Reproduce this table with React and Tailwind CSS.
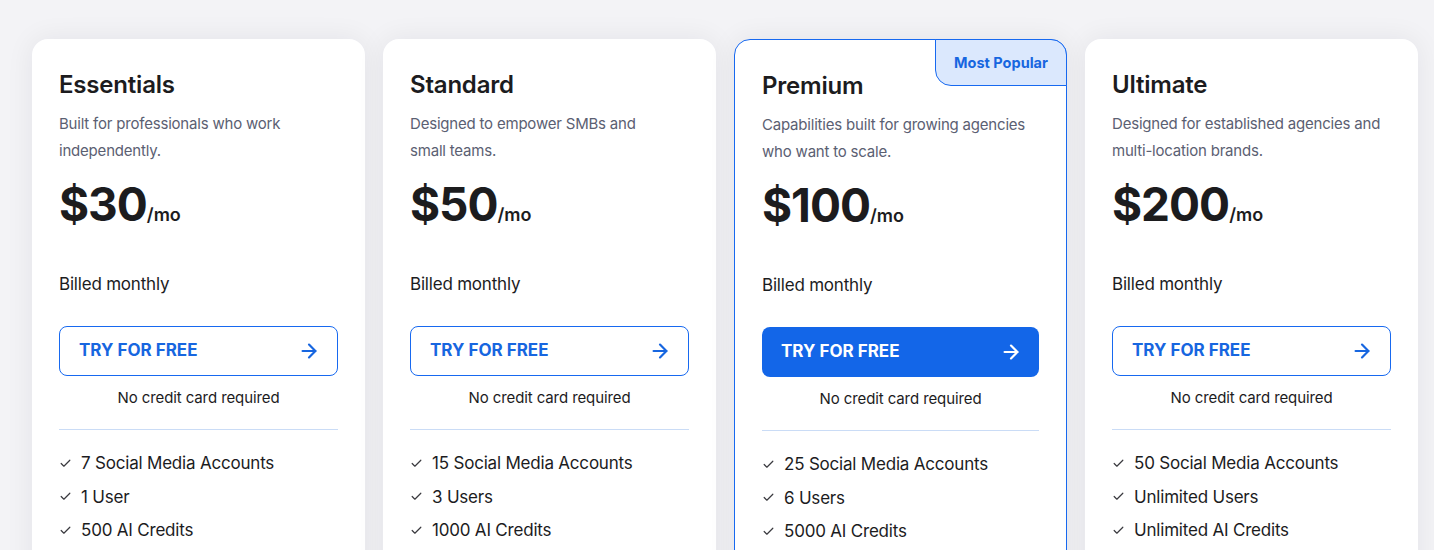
import { ArrowRight, Check } from "lucide-react";

const plans = [
  {
    name: "Essentials",
    desc: ["Built for professionals who work", "independently."],
    price: "$30",
    features: ["7 Social Media Accounts", "1 User", "500 AI Credits"],
  },
  {
    name: "Standard",
    desc: ["Designed to empower SMBs and", "small teams."],
    price: "$50",
    features: ["15 Social Media Accounts", "3 Users", "1000 AI Credits"],
  },
  {
    name: "Premium",
    desc: ["Capabilities built for growing agencies", "who want to scale."],
    price: "$100",
    features: ["25 Social Media Accounts", "6 Users", "5000 AI Credits"],
    popular: true,
  },
  {
    name: "Ultimate",
    desc: ["Designed for established agencies and", "multi-location brands."],
    price: "$200",
    features: ["50 Social Media Accounts", "Unlimited Users", "Unlimited AI Credits"],
  },
];

function PlanCard({ plan }) {
  return (
    <div
      className={`relative bg-white rounded-2xl shadow-[0_0_28px_rgba(20,20,40,0.07)] px-[27px] pt-[30px] pb-10 ${
        plan.popular ? "border border-[#1769f0]" : ""
      }`}
    >
      {plan.popular && (
        <div className="absolute -top-px -right-px h-[47px] w-[132px] flex items-center justify-center bg-[#dbe8fd] border border-[#1769f0] rounded-tr-2xl rounded-bl-2xl text-[14.5px] font-bold text-[#1766e0]">
          Most Popular
        </div>
      )}
      <h3 className="text-[24px] leading-8 font-semibold text-[#1c1c1e] tracking-[-0.2px]">{plan.name}</h3>
      <p className="mt-[9px] text-[15px] leading-[27px] text-[#5b6072] tracking-[-0.2px] whitespace-nowrap">
        {plan.desc[0]}
        <br />
        {plan.desc[1]}
      </p>
      <div className="mt-[16px] flex items-baseline text-[#1c1c1e]">
        <span className="text-[46px] leading-[48px] font-bold tracking-[-1px]">{plan.price}</span>
        <span className="text-[18px] font-semibold">/mo</span>
      </div>
      <p className="mt-[44px] text-[17px] leading-6 text-[#1c1c1e] tracking-[-0.2px]">Billed monthly</p>
      <button
        className={`mt-[30px] w-full h-[50px] rounded-lg flex items-center justify-between pl-[19px] pr-[17px] text-[17px] font-bold ${
          plan.popular
            ? "bg-[#1366e8] text-white"
            : "border border-[#1769f0] text-[#1766e0]"
        }`}
      >
        TRY FOR FREE
        <ArrowRight size={22} strokeWidth={2.4} />
      </button>
      <p className="mt-[12px] text-center text-[15px] leading-5 text-[#1c1c1e] tracking-[-0.1px]">No credit card required</p>
      <div className="mt-[21px] h-px bg-[#cadcf6]" />
      <ul className="mt-[21px] flex flex-col gap-[9.5px]">
        {plan.features.map((f) => (
          <li key={f} className="flex items-center gap-[9px] text-[17px] leading-6 text-[#1c1c1e] tracking-[-0.2px]">
            <Check size={13} strokeWidth={2.2} className="text-[#3a3a3f]" />
            {f}
          </li>
        ))}
      </ul>
    </div>
  );
}

export default function App() {
  return (
    <div
      className="min-h-[550px] bg-[#f3f3f6] pt-[39px] pl-8 pr-4 overflow-hidden"
      style={{ fontFamily: "Inter, Lato, sans-serif" }}
    >
      <div className="grid grid-cols-4 gap-[18px]">
        {plans.map((p) => (
          <PlanCard key={p.name} plan={p} />
        ))}
      </div>
    </div>
  );
}
